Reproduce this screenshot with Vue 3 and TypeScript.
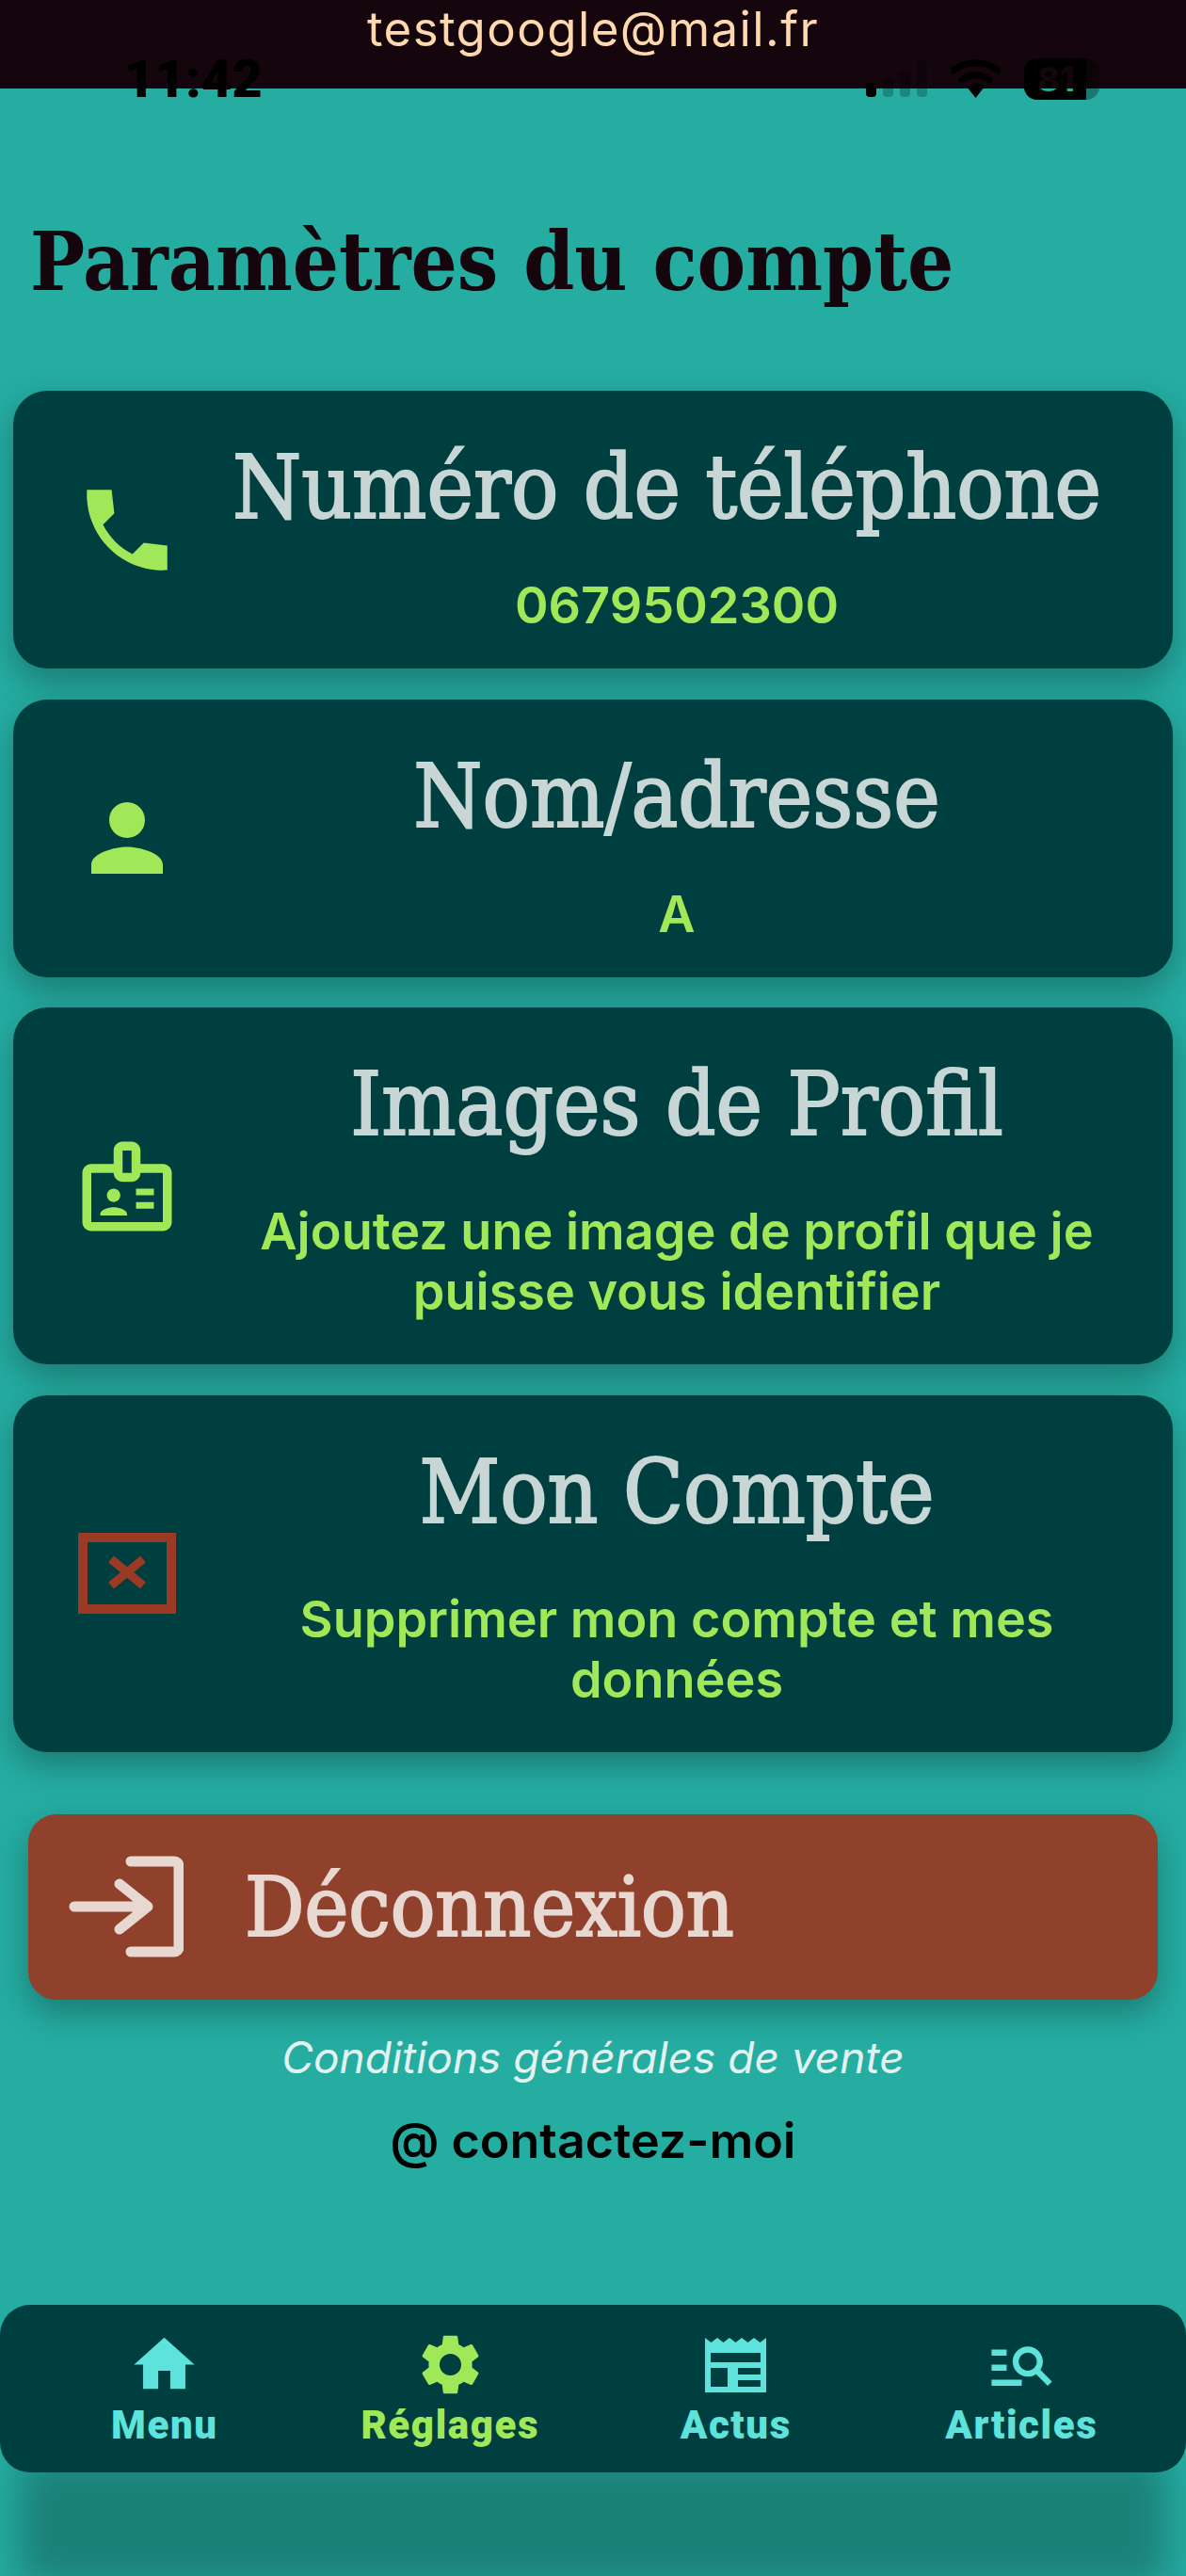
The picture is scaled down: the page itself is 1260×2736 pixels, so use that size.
<template>
  <div class="page">
    <header class="top-bar">
      <span class="mail">testgoogle@mail.fr</span>
      <div class="status">
        <span class="time">11:42</span>
        <div class="status-icons">
          <div class="signal">
            <i class="bar bar-on"></i>
            <i class="bar bar-2"></i>
            <i class="bar bar-3"></i>
            <i class="bar bar-4"></i>
          </div>
          <svg class="wifi" viewBox="0 0 53 42">
            <path d="M3 13C16 2 37 2 50 13" fill="none" stroke="#000" stroke-width="7" stroke-linecap="round" />
            <path d="M12 23C20 16 33 16 41 23" fill="none" stroke="#000" stroke-width="7" stroke-linecap="round" />
            <path d="M17 30C23 25 30 25 36 30L26.5 42Z" fill="#000" />
          </svg>
          <div class="battery">
            <div class="battery-level"></div>
            <span class="battery-text">81</span>
          </div>
        </div>
      </div>
    </header>

    <h1 class="page-title">Paramètres du compte</h1>

    <section class="cards">
      <div v-for="card in cards" :key="card.title" class="card" :class="{ tall: card.tall }">
        <div class="card-icon">
          <svg v-if="card.icon === 'phone'" viewBox="0 0 24 24" width="114" height="114">
            <path fill="#a0e857" d="M21 15.46l-5.27-.61-2.52 2.52c-2.83-1.44-5.15-3.75-6.59-6.59l2.53-2.53L8.54 3H3.03C2.45 13.18 10.82 21.55 21 20.97v-5.51z" />
          </svg>
          <svg v-else-if="card.icon === 'person'" viewBox="0 0 24 24" width="114" height="114">
            <path fill="#a0e857" d="M12 12c2.21 0 4-1.79 4-4s-1.79-4-4-4-4 1.79-4 4 1.79 4 4 4zm0 2c-2.67 0-8 1.34-8 4v2h16v-2c0-2.66-5.33-4-8-4z" />
          </svg>
          <svg v-else-if="card.icon === 'badge'" viewBox="0 0 24 24" width="114" height="114">
            <path fill="#a0e857" d="M20 7h-5V4c0-1.1-.9-2-2-2h-2c-1.1 0-2 .9-2 2v3H4c-1.1 0-2 .9-2 2v11c0 1.1.9 2 2 2h16c1.1 0 2-.9 2-2V9c0-1.1-.9-2-2-2zM11 4h2v5h-2V4zm9 16H4V9h5c0 1.1.9 2 2 2h2c1.1 0 2-.9 2-2h5v11zM18 12.5h-4V14h4zM18 15.5h-4V17h4zM9 15.5c.83 0 1.5-.67 1.5-1.5s-.67-1.5-1.5-1.5-1.5.67-1.5 1.5.67 1.5 1.5 1.5zM12 18.2c0-1-2-1.5-3-1.5s-3 .5-3 1.5v.3h6z" />
          </svg>
          <svg v-else viewBox="0 0 104 86" width="104" height="86">
            <rect x="5" y="5" width="94" height="76" fill="none" stroke="#9a3a24" stroke-width="10" />
            <path d="M35 28L69 56M69 28L35 56" stroke="#9a3a24" stroke-width="9" fill="none" />
          </svg>
        </div>
        <div class="card-text">
          <h2 class="card-title">{{ card.title }}</h2>
          <p class="card-sub">{{ card.sub }}</p>
        </div>
      </div>
    </section>

    <button class="logout">
      <svg viewBox="0 0 122 108" width="122" height="108">
        <path d="M6 54H82M54 30L84 54L54 78" fill="none" stroke="#e8d8d2" stroke-width="11" stroke-linecap="round" stroke-linejoin="round" />
        <path d="M66 6H112a5 5 0 0 1 5 5V97a5 5 0 0 1-5 5H66" fill="none" stroke="#e8d8d2" stroke-width="11" stroke-linecap="round" />
      </svg>
      <span>Déconnexion</span>
    </button>

    <div class="cgv">Conditions générales de vente</div>
    <div class="contact">@ contactez-moi</div>

    <nav class="nav">
      <div v-for="item in navItems" :key="item.label" class="nav-item" :class="{ active: item.active }">
        <div class="nav-icon">
          <svg v-if="item.path" viewBox="0 0 24 24" width="77" height="77">
            <path fill="currentColor" :d="item.path" />
          </svg>
          <svg v-else viewBox="0 0 65 58" width="65" height="58">
            <path
              fill="currentColor"
              fill-rule="evenodd"
              d="M0 0L6.5 5L13 0L19.5 5L26 0L32.5 5L39 0L45.5 5L52 0L58.5 5L65 0V58H0ZM6 16V26H59V16ZM6 32V52H24V32ZM35 32V39H59V32ZM35 45V52H59V45Z"
            />
          </svg>
        </div>
        <span class="nav-label">{{ item.label }}</span>
      </div>
    </nav>
  </div>
</template>

<script setup lang="ts">
interface Card {
  icon: string
  title: string
  sub: string
  tall?: boolean
}

interface NavItem {
  label: string
  path?: string
  active?: boolean
}

const cards: Card[] = [
  { icon: 'phone', title: 'Numéro de téléphone', sub: '0679502300' },
  { icon: 'person', title: 'Nom/adresse', sub: 'A' },
  { icon: 'badge', title: 'Images de Profil', sub: 'Ajoutez une image de profil que je puisse vous identifier', tall: true },
  { icon: 'delete', title: 'Mon Compte', sub: 'Supprimer mon compte et mes données', tall: true }
]

const navItems: NavItem[] = [
  { label: 'Menu', path: 'M12 3L2 12h3v8h5v-6h4v6h5v-8h3z' },
  {
    label: 'Réglages',
    active: true,
    path: 'M19.14 12.94c.04-.3.06-.61.06-.94 0-.32-.02-.64-.07-.94l2.03-1.58c.18-.14.23-.41.12-.61l-1.92-3.32c-.12-.22-.37-.29-.59-.22l-2.39.96c-.5-.38-1.03-.7-1.62-.94l-.36-2.54c-.04-.24-.24-.41-.48-.41h-3.84c-.24 0-.43.17-.47.41l-.36 2.54c-.59.24-1.13.57-1.62.94l-2.39-.96c-.22-.08-.47 0-.59.22L2.74 8.87c-.12.21-.08.47.12.61l2.03 1.58c-.05.3-.09.63-.09.94s.02.64.07.94l-2.03 1.58c-.18.14-.23.41-.12.61l1.92 3.32c.12.22.37.29.59.22l2.39-.96c.5.38 1.03.7 1.62.94l.36 2.54c.05.24.24.41.48.41h3.84c.24 0 .44-.17.47-.41l.36-2.54c.59-.24 1.13-.56 1.62-.94l2.39.96c.22.08.47 0 .59-.22l1.92-3.32c.12-.22.07-.47-.12-.61l-2.01-1.58zM12 15.6c-1.98 0-3.6-1.62-3.6-3.6s1.62-3.6 3.6-3.6 3.6 1.62 3.6 3.6-1.62 3.6-3.6 3.6z'
  },
  { label: 'Actus' },
  {
    label: 'Articles',
    path: 'M7 9H2V7h5v2zm0 3H2v2h5v-2zm13.59 7l-3.83-3.83c-.8.52-1.74.83-2.76.83-2.76 0-5-2.24-5-5s2.24-5 5-5 5 2.24 5 5c0 1.02-.31 1.96-.83 2.75L22 17.59 20.59 19zM17 11c0-1.65-1.35-3-3-3s-3 1.35-3 3 1.35 3 3 3 3-1.35 3-3zM2 19h10v-2H2v2z'
  }
]
</script>

<style>
html,
body {
  margin: 0;
  background: #25ada2;
}
</style>

<style scoped>
.page {
  position: relative;
  width: 1260px;
  height: 2736px;
  overflow: hidden;
  background: #25ada2;
  font-family: Inter, "Noto Sans", sans-serif;
}

.top-bar {
  position: relative;
  height: 94px;
  background: #14060c;
  text-align: center;
}

.mail {
  display: block;
  color: #ffd9ad;
  font-size: 51px;
  letter-spacing: 1.4px;
  line-height: 62px;
}

/* le statut systeme passe par dessus la barre */
.status {
  position: absolute;
  top: 62px;
  left: 132px;
  right: 92px;
  display: flex;
  justify-content: space-between;
  height: 44px;
}

.time {
  color: #000;
  font-family: Roboto, sans-serif;
  font-size: 56px;
  font-weight: 900;
  line-height: 44px;
}

.status-icons {
  display: flex;
  gap: 25px;
}

.signal {
  display: flex;
  align-items: flex-end;
  gap: 7px;
  height: 41px;
}

.bar {
  width: 11px;
  border-radius: 4px;
  background: rgba(0, 0, 0, 0.22);
}

.bar-on {
  height: 15px;
  background: #000;
}

.bar-2 {
  height: 20px;
}

.bar-3 {
  height: 28px;
}

.bar-4 {
  height: 40px;
}

.wifi {
  width: 53px;
  height: 42px;
}

.battery {
  position: relative;
  width: 80px;
  height: 44px;
  border-radius: 14px;
  background: rgba(0, 0, 0, 0.3);
  overflow: hidden;
}

.battery-level {
  width: 66px;
  height: 100%;
  background: #000;
}

.battery-text {
  position: absolute;
  top: 0;
  left: 14px;
  font-family: Inter, sans-serif;
  font-size: 36px;
  font-weight: 800;
  line-height: 44px;
  background: linear-gradient(#14060c 0 32px, #25ada2 32px);
  -webkit-background-clip: text;
  background-clip: text;
  color: transparent;
}

.page-title {
  margin: 0;
  padding: 134px 0 0 32px;
  color: #14060c;
  font-family: "DejaVu Serif Condensed", "DejaVu Serif", serif;
  font-size: 86px;
  font-weight: 700;
  line-height: 100px;
}

.cards {
  display: flex;
  flex-direction: column;
  gap: 32.5px;
  margin: 0 14px;
  padding-top: 87px;
}

.card {
  display: flex;
  align-items: center;
  height: 295px;
  border-radius: 36px;
  background: #003f3f;
  box-shadow: 0 14px 36px rgba(0, 0, 0, 0.3);
}

.card.tall {
  height: 379px;
}

.card-icon {
  display: flex;
  flex: none;
  align-items: center;
  justify-content: center;
  width: 114px;
  margin-left: 64px;
}

.card-text {
  flex: 1;
  padding: 0 54px 0 54px;
  text-align: center;
  align-self: flex-start;
}

.card-title {
  margin: 42px 0 0;
  color: #c8d6d6;
  font-family: "DejaVu Serif Condensed", "DejaVu Serif", serif;
  font-size: 93px;
  font-weight: 400;
  line-height: 122px;
  white-space: nowrap;
  -webkit-text-stroke: 2px #c8d6d6;
}

/* le premier titre deborde un peu vers la gauche */
.card:first-child .card-title {
  padding-right: 21px;
}

.card-sub {
  margin: 32px 0 0;
  color: #a0e857;
  font-size: 54px;
  font-weight: 600;
  line-height: 64px;
}

.tall .card-sub {
  margin-top: 42px;
}

.logout {
  display: flex;
  align-items: center;
  gap: 65px;
  width: 1200px;
  height: 197px;
  margin: 66px 0 0 30px;
  padding: 0 0 0 43px;
  border: none;
  border-radius: 30px;
  background: #8f412c;
  box-shadow: 0 14px 36px rgba(0, 0, 0, 0.3);
  color: #e8d8d2;
  font-family: "DejaVu Serif Condensed", "DejaVu Serif", serif;
  font-size: 88px;
  -webkit-text-stroke: 2px #e8d8d2;
}

.cgv {
  margin-top: 36px;
  color: #e2f3ef;
  font-size: 46px;
  font-style: italic;
  line-height: 50px;
  text-align: center;
}

.contact {
  margin-top: 36px;
  color: #000;
  font-size: 52px;
  font-weight: 600;
  line-height: 56px;
  text-align: center;
}

.nav {
  display: grid;
  grid-template-columns: repeat(4, 1fr);
  position: absolute;
  left: 0;
  right: 0;
  top: 2448px;
  height: 178px;
  padding: 0 23px;
  box-sizing: border-box;
  border-radius: 32px;
  background: #003f3f;
  box-shadow: 0 140px 40px -20px rgba(0, 0, 0, 0.26);
}

.nav-item {
  display: flex;
  flex-direction: column;
  align-items: center;
  padding-top: 25px;
  color: #5de3db;
}

.nav-item.active {
  color: #a0e857;
}

.nav-icon {
  display: flex;
  align-items: center;
  justify-content: center;
  height: 77px;
}

.nav-label {
  margin-top: 1px;
  font-family: Roboto, sans-serif;
  font-size: 42px;
  font-weight: 900;
  letter-spacing: 1.6px;
  line-height: 50px;
}
</style>
